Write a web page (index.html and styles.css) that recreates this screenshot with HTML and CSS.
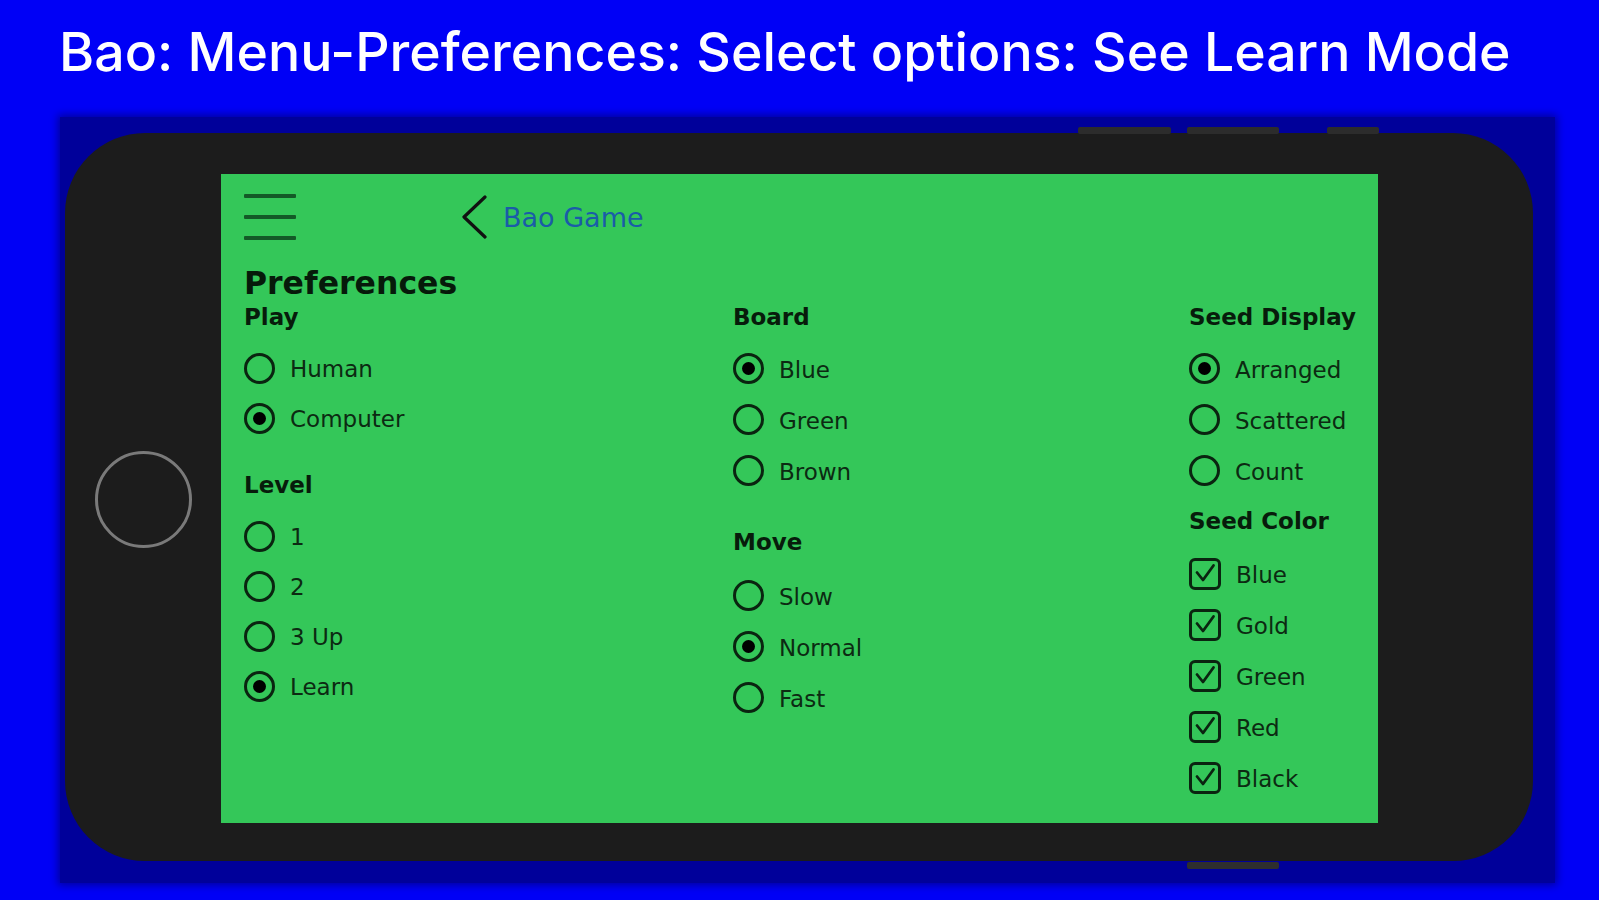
FILE: index.html
```html
<!DOCTYPE html>
<html lang="en">
<head>
<meta charset="utf-8">
<title>Bao Preferences</title>
<link rel="stylesheet" href="styles.css">
</head>
<body>
<h1 class="title">Bao: Menu-Preferences: Select options: See Learn Mode</h1>
<div class="stage">
  <div class="phone">
    <span class="bump bump-a"></span>
    <span class="bump bump-b"></span>
    <span class="bump bump-c"></span>
    <span class="bump bump-bottom"></span>
    <div class="home"></div>
    <div class="screen">
      <div class="nav">
        <div class="burger"><span></span><span></span><span></span></div>
        <svg class="chev" width="28" height="44" viewBox="0 0 28 44"><path d="M25 2 L4 22 L25 42" fill="none" stroke="#111" stroke-width="3.2" stroke-linecap="round" stroke-linejoin="round"/></svg>
        <span class="back-label">Bao Game</span>
      </div>
      <h2 class="page-title">Preferences</h2>
      <div class="cols">
        <div class="col col-1">
          <div class="head">Play</div>
          <div class="row"><span class="radio"></span><span class="lbl">Human</span></div>
          <div class="row"><span class="radio on"></span><span class="lbl">Computer</span></div>
          <div class="head group">Level</div>
          <div class="row"><span class="radio"></span><span class="lbl">1</span></div>
          <div class="row"><span class="radio"></span><span class="lbl">2</span></div>
          <div class="row"><span class="radio"></span><span class="lbl">3 Up</span></div>
          <div class="row"><span class="radio on"></span><span class="lbl">Learn</span></div>
        </div>
        <div class="col col-2">
          <div class="head">Board</div>
          <div class="row"><span class="radio on"></span><span class="lbl">Blue</span></div>
          <div class="row"><span class="radio"></span><span class="lbl">Green</span></div>
          <div class="row"><span class="radio"></span><span class="lbl">Brown</span></div>
          <div class="head group">Move</div>
          <div class="row"><span class="radio"></span><span class="lbl">Slow</span></div>
          <div class="row"><span class="radio on"></span><span class="lbl">Normal</span></div>
          <div class="row"><span class="radio"></span><span class="lbl">Fast</span></div>
        </div>
        <div class="col col-3">
          <div class="head">Seed Display</div>
          <div class="row"><span class="radio on"></span><span class="lbl">Arranged</span></div>
          <div class="row"><span class="radio"></span><span class="lbl">Scattered</span></div>
          <div class="row"><span class="radio"></span><span class="lbl">Count</span></div>
          <div class="head group">Seed Color</div>
          <div class="row"><span class="check"><svg width="25" height="25" viewBox="0 0 25 25"><path d="M4 11.5 L10 19 L20.5 4.5" fill="none" stroke="#0a2410" stroke-width="2.8" stroke-linecap="round" stroke-linejoin="round"/></svg></span><span class="lbl">Blue</span></div>
          <div class="row"><span class="check"><svg width="25" height="25" viewBox="0 0 25 25"><path d="M4 11.5 L10 19 L20.5 4.5" fill="none" stroke="#0a2410" stroke-width="2.8" stroke-linecap="round" stroke-linejoin="round"/></svg></span><span class="lbl">Gold</span></div>
          <div class="row"><span class="check"><svg width="25" height="25" viewBox="0 0 25 25"><path d="M4 11.5 L10 19 L20.5 4.5" fill="none" stroke="#0a2410" stroke-width="2.8" stroke-linecap="round" stroke-linejoin="round"/></svg></span><span class="lbl">Green</span></div>
          <div class="row"><span class="check"><svg width="25" height="25" viewBox="0 0 25 25"><path d="M4 11.5 L10 19 L20.5 4.5" fill="none" stroke="#0a2410" stroke-width="2.8" stroke-linecap="round" stroke-linejoin="round"/></svg></span><span class="lbl">Red</span></div>
          <div class="row"><span class="check"><svg width="25" height="25" viewBox="0 0 25 25"><path d="M4 11.5 L10 19 L20.5 4.5" fill="none" stroke="#0a2410" stroke-width="2.8" stroke-linecap="round" stroke-linejoin="round"/></svg></span><span class="lbl">Black</span></div>
        </div>
      </div>
    </div>
  </div>
</div>
</body>
</html>
```
FILE: styles.css
```css
* { box-sizing: border-box; }
html, body { margin: 0; padding: 0; }
body {
  width: 1599px;
  height: 900px;
  overflow: hidden;
  background: #0000f6;
  font-family: "DejaVu Sans", sans-serif;
}
.title {
  margin: 0;
  padding: 22px 0 0 59px;
  height: 81px;
  font-family: Inter, "Liberation Sans", sans-serif;
  font-weight: 500;
  font-size: 53.6px;
  line-height: 60px;
  color: #ffffff;
  letter-spacing: 0;
  white-space: nowrap;
}
.stage {
  margin: 36px 0 0 60px;
  width: 1495px;
  height: 766px;
  padding: 16px 0 0 5px;
  background: #00009a;
  box-shadow: 0 0 8px 2px #00009a;
}
.phone {
  position: relative;
  width: 1468px;
  height: 728px;
  border-radius: 80px;
  background: #1c1c1c;
  display: flex;
  align-items: flex-start;
}
.bump {
  position: absolute;
  height: 7px;
  background: #2c2c2c;
  border-radius: 2px;
}
.bump-a { top: -6px; left: 1013px; width: 93px; }
.bump-b { top: -6px; left: 1122px; width: 92px; }
.bump-c { top: -6px; left: 1262px; width: 52px; }
.bump-bottom { bottom: -8px; left: 1122px; width: 92px; background: #2e2e2e; }
.home {
  flex: none;
  width: 97px;
  height: 97px;
  margin: 318px 0 0 30px;
  border-radius: 50%;
  border: 3px solid #7a7a7a;
}
.screen {
  flex: none;
  width: 1157px;
  height: 649px;
  margin: 41px 0 0 29px;
  background: #34c759;
  padding: 20px 0 0 23px;
}
.nav {
  display: flex;
  align-items: center;
  height: 46px;
}
.burger {
  width: 52px;
  height: 46px;
  display: flex;
  flex-direction: column;
  justify-content: space-between;
  padding: 0;
}
.burger span {
  display: block;
  height: 4px;
  background: #135a27;
  border-radius: 1px;
}
.chev {
  margin-left: 164px;
  display: block;
}
.back-label {
  margin-left: 15px;
  font-size: 27px;
  color: #1a5ca8;
  line-height: 46px;
  padding-top: 2px;
}
.page-title {
  margin: 25px 0 0 0;
  font-size: 31.5px;
  font-weight: bold;
  line-height: 36px;
  color: #061a0a;
  height: 36px;
}
.cols {
  display: grid;
  grid-template-columns: 489px 456px auto;
}
.col { display: flex; flex-direction: column; }
.head {
  font-weight: bold;
  font-size: 23px;
  line-height: 33px;
  height: 33px;
  margin-bottom: 9px;
  color: #071c0b;
  white-space: nowrap;
}
.row {
  display: flex;
  align-items: center;
  height: 50px;
  gap: 15px;
}
.col-2 .row, .col-3 .row { height: 51px; }
.col-1 .head.group { margin-top: 26px; }
.col-2 .head.group { margin-top: 30px; margin-bottom: 11px; }
.col-3 .head.group { margin-top: 9px; margin-bottom: 10px; }
.lbl {
  font-size: 23px;
  color: #0c2a12;
  white-space: nowrap;
  padding-top: 2px;
}
.radio {
  flex: none;
  width: 31px;
  height: 31px;
  border: 3px solid #0a2410;
  border-radius: 50%;
  display: flex;
  align-items: center;
  justify-content: center;
}
.radio.on::after {
  content: "";
  width: 13px;
  height: 13px;
  border-radius: 50%;
  background: #000;
}
.check {
  flex: none;
  width: 32px;
  height: 32px;
  border: 3px solid #0a2410;
  border-radius: 6px;
  display: flex;
  align-items: center;
  justify-content: center;
}
.check svg { display: block; }
```
